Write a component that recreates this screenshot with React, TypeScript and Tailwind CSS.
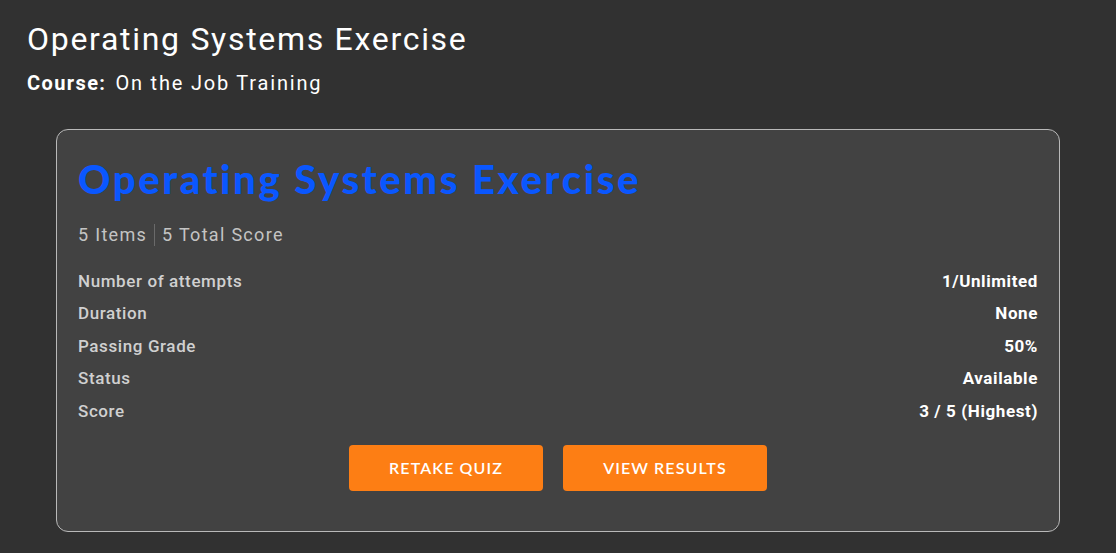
const rows = [
  { label: 'Number of attempts', value: '1/Unlimited' },
  { label: 'Duration', value: 'None' },
  { label: 'Passing Grade', value: '50%' },
  { label: 'Status', value: 'Available' },
  { label: 'Score', value: '3 / 5 (Highest)' },
];

export default function App() {
  return (
    <div className="min-h-screen bg-[#313131] pt-[18px] text-white" style={{ fontFamily: 'Roboto, "Noto Sans", sans-serif' }}>
      <div className="px-[27px]">
        <h1 className="text-[32px] leading-[42px] font-normal tracking-[1.7px]">Operating Systems Exercise</h1>
        <p className="mt-[9px] text-[20px] leading-[28px] tracking-[1.4px]">
          <span className="font-bold">Course:</span>
          <span className="ml-[9px] tracking-[1.8px]">On the Job Training</span>
        </p>
      </div>

      <div className="mx-[56px] mt-[32px] rounded-[12px] border border-[#b9b9b9] bg-[#424242] px-[21px] pt-[21px] pb-[40px]">
        <h2
          className="text-[40px] leading-[56px] font-black tracking-[2.6px] text-[#0a57ff]"
          style={{ fontFamily: 'Lato, "Open Sans", sans-serif' }}
        >
          Operating Systems Exercise
        </h2>
        <div className="mt-[16px] flex items-center text-[18px] leading-[24px] tracking-[1.3px] text-[#c4c4c4]">
          <span>5 Items</span>
          <span className="mx-[7px] h-[22px] w-px bg-[#6a6a6a]" />
          <span>5 Total Score</span>
        </div>

        <div className="mt-[18px] flex flex-col">
          {rows.map((r) => (
            <div key={r.label} className="flex items-center justify-between h-[32.5px] text-[17px] tracking-[0.6px]">
              <span className="font-medium text-[#d0d0d0]">{r.label}</span>
              <span className="font-bold text-white">{r.value}</span>
            </div>
          ))}
        </div>

        <div
          className="mt-[17px] flex justify-center gap-[20px]"
          style={{ fontFamily: 'Lato, "Open Sans", sans-serif' }}
        >
          <button className="h-[46px] w-[194px] rounded-[4px] bg-[#fd7e14] text-[16px] font-semibold uppercase tracking-[1.1px] text-white">
            Retake Quiz
          </button>
          <button className="h-[46px] w-[204px] rounded-[4px] bg-[#fd7e14] text-[16px] font-semibold uppercase tracking-[1.1px] text-white">
            View Results
          </button>
        </div>
      </div>
    </div>
  );
}
